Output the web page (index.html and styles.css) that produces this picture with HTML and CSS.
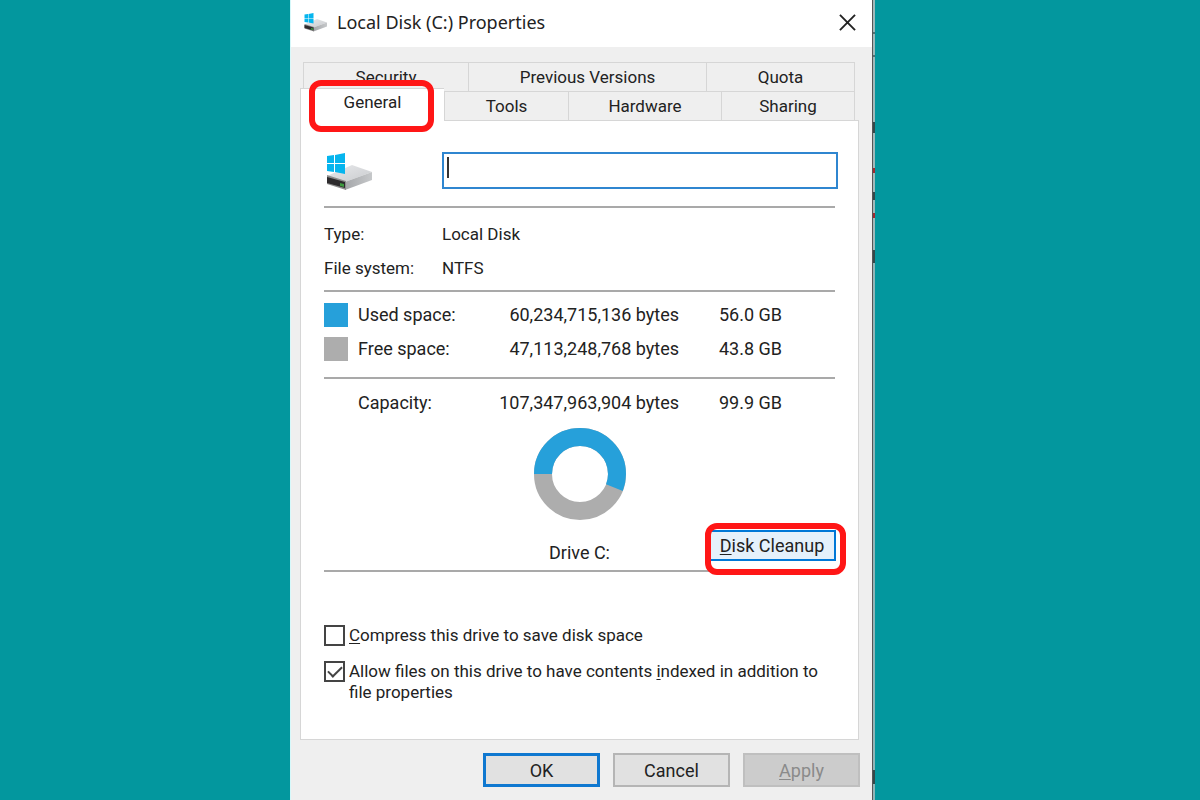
FILE: index.html
```html
<!DOCTYPE html>
<html lang="en">
<head>
    <meta charset="UTF-8">
    <meta name="viewport" content="width=device-width, initial-scale=1.0">
    <title>Local Disk (C:) Properties</title>
    <link rel="stylesheet" href="styles.css">
</head>
<body>
    <!-- Drive icon, used in the title bar and the General tab -->
    <svg class="symbols" aria-hidden="true">
        <defs>
            <linearGradient id="driveTop" x1="0" y1="0" x2="1" y2="1">
                <stop offset="0" stop-color="#e9eaec"/>
                <stop offset="1" stop-color="#c9cbce"/>
            </linearGradient>
            <linearGradient id="driveSide" x1="0" y1="0" x2="1" y2="0">
                <stop offset="0" stop-color="#a5a7aa"/>
                <stop offset="1" stop-color="#c6c8ca"/>
            </linearGradient>
            <symbol id="drive" viewBox="0 0 48 38">
                <path d="M1 23 L26 12 L46 19 L19 29 Z" fill="url(#driveTop)"/>
                <path d="M19 29 L46 19 V27 L19 37 Z" fill="url(#driveSide)"/>
                <path d="M1 22 L20 28 V37 L1 31 Z" fill="#8c8c8c"/>
                <path d="M1 24 L19 29 V35 L1 30 Z" fill="#2d2b2d"/>
                <path d="M14 30 L18 31 V34 L14 33 Z" fill="#3d9a3f"/>
                <path d="M1 3 L8 2 V10 H1 Z M9 2 L19 0 V10 H9 Z M1 11 H8 V19 L1 18 Z M9 11 H19 V21 L9 19 Z" fill="#06b5ee"/>
            </symbol>
        </defs>
    </svg>

    <main class="window">
        <div class="dialog">
            <header class="title-bar">
                <svg class="title-icon" aria-hidden="true"><use href="#drive"/></svg>
                <h1>Local Disk (C:) Properties</h1>
                <button class="close-btn" aria-label="Close">
                    <svg viewBox="0 0 18 18" aria-hidden="true"><path d="M1 1 L17 17 M17 1 L1 17"/></svg>
                </button>
            </header>

            <div class="content">
                <nav class="tabs">
                    <div class="tab-row tab-row-back">
                        <button class="tab">Security</button>
                        <button class="tab">Previous Versions</button>
                        <button class="tab">Quota</button>
                    </div>
                    <div class="tab-row tab-row-front">
                        <button class="tab active highlight">General</button>
                        <button class="tab">Tools</button>
                        <button class="tab">Hardware</button>
                        <button class="tab">Sharing</button>
                    </div>
                </nav>

                <div class="panel">
                    <section class="drive-name">
                        <svg class="drive-icon" aria-hidden="true"><use href="#drive"/></svg>
                        <div class="name-field">
                            <input type="text" aria-label="Drive name">
                            <span class="caret"></span>
                        </div>
                    </section>

                    <section class="drive-info">
                        <dl>
                            <dt>Type:</dt>
                            <dd>Local Disk</dd>
                            <dt>File system:</dt>
                            <dd>NTFS</dd>
                        </dl>
                    </section>

                    <section class="space">
                        <table>
                            <tr>
                                <th scope="row"><span class="swatch used"></span>Used space:</th>
                                <td class="bytes">60,234,715,136 bytes</td>
                                <td class="size">56.0 GB</td>
                            </tr>
                            <tr>
                                <th scope="row"><span class="swatch free"></span>Free space:</th>
                                <td class="bytes">47,113,248,768 bytes</td>
                                <td class="size">43.8 GB</td>
                            </tr>
                        </table>
                    </section>

                    <section class="capacity">
                        <table>
                            <tr>
                                <th scope="row"><span class="swatch"></span>Capacity:</th>
                                <td class="bytes">107,347,963,904 bytes</td>
                                <td class="size">99.9 GB</td>
                            </tr>
                        </table>
                        <svg class="chart" viewBox="0 0 92 92" role="img" aria-label="Used and free space">
                            <circle class="chart-free" cx="46" cy="46" r="37"/>
                            <circle class="chart-used" cx="46" cy="46" r="37" pathLength="100" transform="rotate(180 46 46)"/>
                        </svg>
                        <div class="cleanup">
                            <p>Drive C:</p>
                            <div class="cleanup-action highlight">
                                <button class="cleanup-btn"><u>D</u>isk Cleanup</button>
                            </div>
                        </div>
                    </section>

                    <section class="options">
                        <label>
                            <input type="checkbox">
                            <span><u>C</u>ompress this drive to save disk space</span>
                        </label>
                        <label>
                            <input type="checkbox" checked>
                            <span>Allow files on this drive to have contents <u>i</u>ndexed in addition to file properties</span>
                        </label>
                    </section>
                </div>

                <footer class="buttons">
                    <button class="btn btn-default">OK</button>
                    <button class="btn">Cancel</button>
                    <button class="btn" disabled><u>A</u>pply</button>
                </footer>
            </div>
        </div>
        <div class="backdrop-edge"></div>
    </main>
</body>
</html>
```
FILE: styles.css
```css
* {
    box-sizing: border-box;
}
body {
    margin: 0;
    padding-right: 35px;
    min-height: 100vh;
    display: flex;
    justify-content: center;
    background-color: #03979e;
    font-family: Roboto, sans-serif;
    font-size: 17px;
    line-height: 21px;
    color: #222;
}
h1, p, dl, dd {
    margin: 0;
}
button, input {
    font: inherit;
    color: inherit;
}
u {
    text-underline-offset: 2px;
}
.symbols {
    position: absolute;
    width: 0;
    height: 0;
}
.window {
    display: flex;
    width: 100%;
    max-width: 585px;
}
.dialog {
    flex: 1;
    background-color: #efefef;
    border-left: 1px solid #d5f8fa;
}
.backdrop-edge {
    width: 3px;
    border-left: 1px solid #555;
    background: linear-gradient(
        #9fb9ba 0 32px, #557072 32px 34px,
        #9fb9ba 34px 55px, #557072 55px 57px,
        #9fb9ba 57px 122px, #34494b 122px 133px,
        #9fb9ba 133px 168px, #a02a30 168px 173px,
        #9fb9ba 173px 192px, #34494b 192px 200px,
        #9fb9ba 200px 213px, #a02a30 213px 218px,
        #9fb9ba 218px 250px, #34494b 250px 263px,
        #8fb5b7 263px 770px, #34494b 770px 784px,
        #8fb5b7 784px
    );
}

/* Title bar */
.title-bar {
    display: flex;
    align-items: center;
    height: 47px;
    padding: 0 16px 3px 13px;
    background-color: #fff;
}
.title-icon {
    width: 24px;
    height: 19px;
}
.title-bar h1 {
    flex: 1;
    margin-left: 9px;
    font-family: "Noto Sans", sans-serif;
    font-size: 18px;
    font-weight: normal;
}
.close-btn {
    display: flex;
    padding: 0;
    border: none;
    background: none;
}
.close-btn svg {
    width: 17px;
    height: 17px;
    stroke: #222;
    stroke-width: 2;
}

/* Tabs */
.content {
    padding: 15px 13px 13px 9px;
}
.tabs {
    padding: 0 4px 0 3px;
}
.tab-row {
    display: grid;
    height: 29px;
}
.tab-row-back {
    grid-template-columns: 165fr 238fr 149fr;
}
.tab-row-front {
    grid-template-columns: 141fr 124fr 153fr 134fr;
}
.tab {
    padding: 0;
    border: 1px solid #d6d6d6;
    border-width: 1px 0 0 1px;
    background-color: #efefef;
}
.tab:last-child {
    border-right-width: 1px;
}
.tab.active {
    margin: -3px 0 -1px -3px;
    padding-bottom: 6px;
    border-left-width: 1px;
    background-color: #fff;
    z-index: 1;
}

/* Red marker drawn over a control */
.highlight {
    position: relative;
}
.highlight::after {
    content: "";
    position: absolute;
    border: 6px solid #ff1616;
    border-radius: 12px;
    pointer-events: none;
}
.tab.highlight::after {
    inset: -9px 10px -11px 8px;
}

/* General tab */
.panel {
    padding: 1px 23px;
    border: 1px solid #d6d6d6;
    background-color: #fff;
}
.drive-name, .drive-info, .space, .capacity {
    border-bottom: 2px solid #a9a9a9;
}
.drive-name {
    display: flex;
    align-items: flex-start;
    padding: 30px 0 15px;
}
.drive-icon {
    width: 48px;
    height: 38px;
    margin: 1px 68px 0 2px;
}
.name-field {
    position: relative;
    flex: 1;
    margin-right: -3px;
}
.name-field input {
    display: block;
    width: 100%;
    height: 37px;
    padding: 0 6px;
    border: 2px solid #2f86d0;
    outline: none;
}
.caret {
    position: absolute;
    left: 5px;
    top: 5px;
    width: 2px;
    height: 21px;
    background-color: #333;
}
.drive-info {
    padding: 9px 0 5px;
}
dl {
    display: grid;
    grid-template-columns: 118px 1fr;
    line-height: 34px;
}
.space {
    padding: 6px 0 11px;
}
table {
    border-collapse: collapse;
    font-size: 18px;
    line-height: 34px;
}
th, td {
    height: 34px;
    padding: 0;
    font-weight: normal;
    text-align: left;
}
th {
    display: flex;
    align-items: center;
    gap: 10px;
    width: 155px;
}
.bytes {
    width: 200px;
    text-align: right;
}
.size {
    padding-left: 40px;
}
.swatch {
    width: 24px;
    height: 24px;
}
.used {
    background-color: #26a0da;
}
.free {
    background-color: #adadad;
}
.capacity {
    padding: 7px 0 9px;
}
.chart {
    display: block;
    width: 92px;
    height: 92px;
    margin: 8px auto 10px;
}
.chart circle {
    fill: none;
    stroke-width: 18;
}
.chart-free {
    stroke: #adadad;
}
.chart-used {
    stroke: #26a0da;
    stroke-dasharray: 56 44;
}
.cleanup {
    display: grid;
    grid-template-columns: 1fr auto 1fr;
    align-items: end;
    font-size: 18px;
}
.cleanup p {
    grid-column: 2;
    line-height: 17px;
}
.cleanup-action {
    justify-self: end;
    margin-right: -1px;
}
.cleanup-action::after {
    inset: -7px -10px -14px -3px;
}
.cleanup-btn {
    display: block;
    width: 128px;
    height: 31px;
    padding: 0;
    border: 2px solid #0078d7;
    background-color: #e5f1fb;
}

/* Check boxes */
.options {
    display: flex;
    flex-direction: column;
    gap: 15px;
    padding: 53px 0 35px;
}
.options label {
    display: flex;
    align-items: flex-start;
    gap: 4px;
}
.options input {
    appearance: none;
    flex: none;
    position: relative;
    width: 21px;
    height: 21px;
    margin: 0;
    border: 2px solid #444;
    background-color: #fff;
}
.options input:checked::after {
    content: "";
    position: absolute;
    left: 5px;
    top: 0;
    width: 6px;
    height: 12px;
    border: solid #444;
    border-width: 0 2px 2px 0;
    transform: rotate(45deg);
}

/* Bottom buttons */
.buttons {
    display: flex;
    justify-content: flex-end;
    gap: 13px;
    margin: 13px -1px 0 0;
    font-size: 18px;
}
.btn {
    width: 117px;
    height: 34px;
    padding: 0;
    border: 2px solid #b5b5b5;
    background-color: #e1e1e1;
}
.btn-default {
    border: 3px solid #0f78d0;
}
.btn:disabled {
    border-color: #bfbfbf;
    background-color: #ccc;
    color: #8a8a8a;
}
```
